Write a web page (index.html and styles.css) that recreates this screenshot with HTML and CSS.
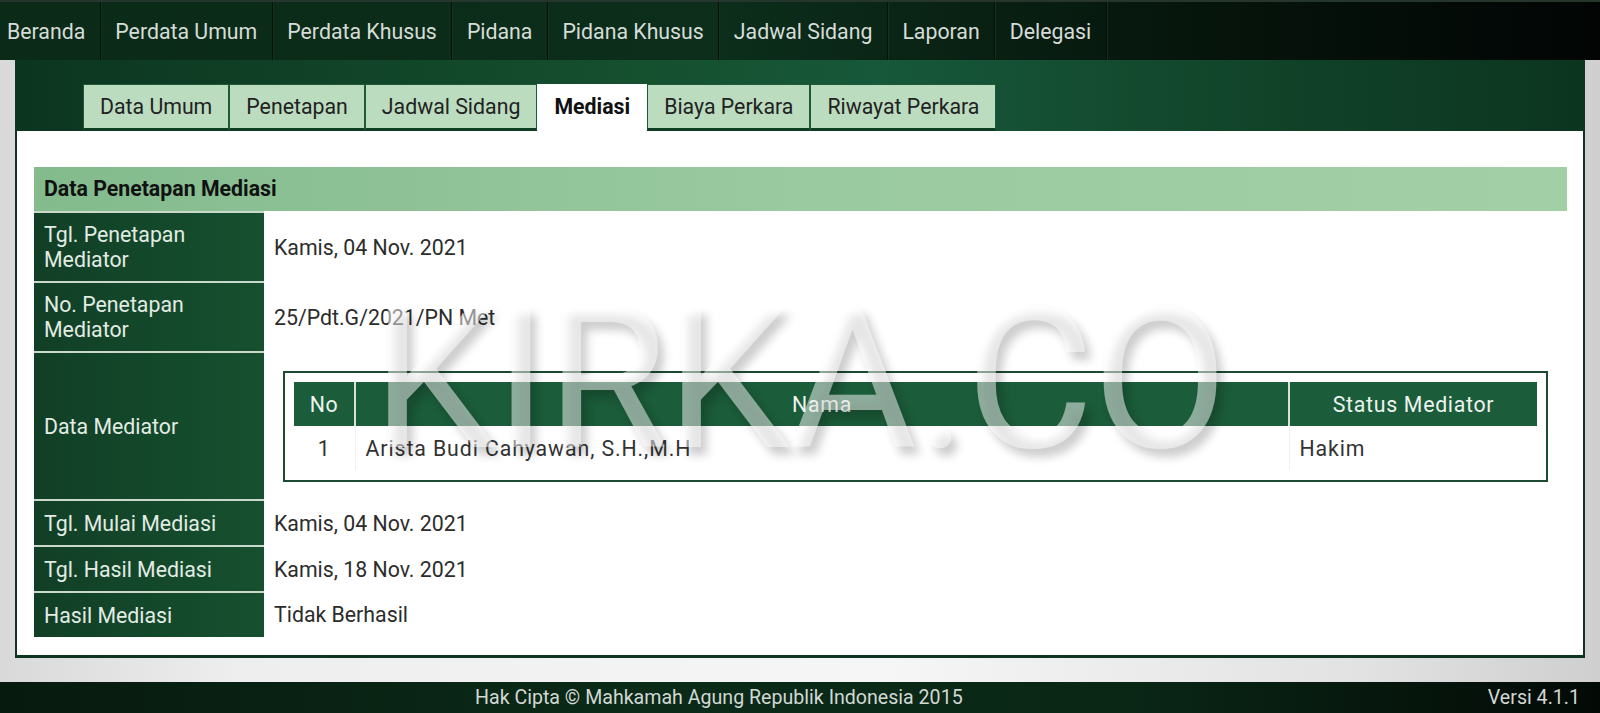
FILE: index.html
```html
<!DOCTYPE html>
<html>
<head>
  <meta charset="UTF-8">
  <title>Detil Perkara - Mediasi</title>
  <link rel="stylesheet" href="styles.css">
</head>
<body>
  <!-- Top menu -->
  <div class="topnav">
    <a class="navItem first">Beranda</a>
    <a class="navItem">Perdata Umum</a>
    <a class="navItem">Perdata Khusus</a>
    <a class="navItem">Pidana</a>
    <a class="navItem">Pidana Khusus</a>
    <a class="navItem">Jadwal Sidang</a>
    <a class="navItem">Laporan</a>
    <a class="navItem">Delegasi</a>
  </div>

  <div class="page">
    <div class="panel">
      <div class="panelHead">
        <div class="tab">Data Umum</div>
        <div class="tab">Penetapan</div>
        <div class="tab">Jadwal Sidang</div>
        <div class="tab active">Mediasi</div>
        <div class="tab">Biaya Perkara</div>
        <div class="tab">Riwayat Perkara</div>
      </div>
      <div class="panelBody">
        <div class="sectionTitle">Data Penetapan Mediasi</div>
        <table class="detail">
          <tr class="tall">
            <th>Tgl. Penetapan<br>Mediator</th>
            <td>Kamis, 04 Nov. 2021</td>
          </tr>
          <tr class="tall">
            <th>No. Penetapan<br>Mediator</th>
            <td>25/Pdt.G/2021/PN Met</td>
          </tr>
          <tr>
            <th>Data Mediator</th>
            <td>
              <div class="mediatorBox">
                <table class="mediator">
                  <colgroup>
                    <col class="colNo">
                    <col>
                    <col class="colStatus">
                  </colgroup>
                  <tr>
                    <th>No</th>
                    <th>Nama</th>
                    <th>Status Mediator</th>
                  </tr>
                  <tr>
                    <td class="num">1</td>
                    <td>Arista Budi Cahyawan, S.H.,M.H</td>
                    <td>Hakim</td>
                  </tr>
                </table>
              </div>
            </td>
          </tr>
          <tr>
            <th>Tgl. Mulai Mediasi</th>
            <td>Kamis, 04 Nov. 2021</td>
          </tr>
          <tr>
            <th>Tgl. Hasil Mediasi</th>
            <td>Kamis, 18 Nov. 2021</td>
          </tr>
          <tr>
            <th>Hasil Mediasi</th>
            <td>Tidak Berhasil</td>
          </tr>
        </table>
      </div>
    </div>
  </div>

  <div class="footer">
    <span class="copy">Hak Cipta &copy; Mahkamah Agung Republik Indonesia 2015</span>
    <span class="version">Versi 4.1.1</span>
  </div>

  <!-- watermark over the screenshot -->
  <div class="watermark">KIRKA.CO</div>
</body>
</html>
```

FILE: styles.css
```css
body {
  font-family: Roboto, "Liberation Sans", Arial, sans-serif;
  margin: 0;
  padding: 0;
  background: linear-gradient(90deg, #d9d9d9 0%, #eeeeee 15%, #f6f6f6 55%, #e2e2e2 85%, #cfcfcf 100%);
  color: #333;
  width: 1600px;
  height: 713px;
  overflow: hidden;
  position: relative;
}
/* Top menu */
.topnav {
  display: flex;
  height: 58px;
  border-top: 2px solid #26362c;
  background: linear-gradient(90deg, #0b2a18 0%, #0c2e1b 45%, #06150c 75%, #020504 100%);
}
.navItem {
  display: flex;
  align-items: center;
  padding: 0 14.5px;
  font-size: 21.3px;
  color: #d6dcd8;
  border-right: 1px solid #041109;
  box-shadow: 1px 0 0 #17301f;
}
.navItem.first {
  padding-left: 7px;
}
/* Main panel */
.page {
  padding: 0 15px;
}
.panel {
  height: 598px;
  box-sizing: border-box;
  border: 2px solid #0e3520;
  border-top: none;
  border-bottom-width: 3px;
  background: #fff;
}
.panelHead {
  display: flex;
  align-items: flex-end;
  height: 71px;
  padding-left: 66px;
  background: linear-gradient(90deg, #0c3520 0%, #15502f 40%, #17583a 55%, #114329 80%, #0c3520 100%);
}
.tab {
  height: 43px;
  line-height: 43px;
  padding: 0 16px;
  font-size: 21.3px;
  color: #222;
  background: #bcdcbf;
  border: 1px solid #1e5a37;
  border-bottom: 3px solid #0f3d24;
}
.tab.active {
  background: #fff;
  font-weight: bold;
  color: #111;
  border-color: #fff;
}
.panelBody {
  padding: 36px 16px 0 17px;
}
.sectionTitle {
  height: 44px;
  line-height: 44px;
  padding-left: 10px;
  font-size: 21.3px;
  font-weight: bold;
  color: #111;
  background: linear-gradient(90deg, #83bb8d 0%, #9acaa0 50%, #a3cfa6 100%);
}
/* Detail table */
table.detail {
  width: 100%;
  border-collapse: collapse;
}
table.detail > tbody > tr > th {
  width: 210px;
  height: 44px;
  padding: 0 10px;
  text-align: left;
  vertical-align: middle;
  font-weight: normal;
  font-size: 21.3px;
  line-height: 25px;
  color: #e2ece4;
  background: linear-gradient(90deg, #113f26, #16502f);
  border-top: 2px solid #cbd9cc;
}
table.detail tr.tall > th {
  height: 68px;
}
table.detail > tbody > tr > td {
  padding: 0 10px;
  font-size: 21.3px;
  color: #2c2c2c;
}
.mediatorBox {
  margin: 19px 9px 18px 9px;
  border: 2px solid #1b4a31;
  padding: 9px 9px 10px 9px;
}
table.mediator {
  width: 100%;
  border-collapse: collapse;
  table-layout: fixed;
}
col.colNo {
  width: 61px;
}
col.colStatus {
  width: 248px;
}
table.mediator th {
  height: 44px;
  padding: 0;
  background: #1b5c3a;
  color: #eef3ef;
  font-weight: normal;
  font-size: 21.3px;
  letter-spacing: 0.7px;
  border-left: 2px solid #d6e2d8;
}
table.mediator th:first-child {
  border-left: none;
}
table.mediator td {
  height: 44px;
  padding: 0 10px;
  font-size: 21.3px;
  letter-spacing: 0.9px;
  color: #333;
  border-left: 1px solid #f0f0f0;
}
table.mediator td:first-child {
  border-left: none;
}
table.mediator td.num {
  padding: 0;
  text-align: center;
}
/* Footer */
.footer {
  display: flex;
  align-items: center;
  height: 31px;
  margin-top: 24px;
  padding: 0 20px 0 475px;
  background: linear-gradient(90deg, #071a0e 0%, #0b2a18 40%, #0a2716 70%, #030a06 100%);
  color: #d2d8d4;
  font-size: 19.6px;
}
.version {
  margin-left: auto;
}
/* Watermark */
.watermark {
  position: absolute;
  left: 372px;
  top: 270px;
  font-size: 197px;
  line-height: 220px;
  letter-spacing: -1.5px;
  color: rgba(255, 255, 255, 0.5);
  text-shadow: 6px 8px 10px rgba(0, 0, 0, 0.2);
  pointer-events: none;
}
```
